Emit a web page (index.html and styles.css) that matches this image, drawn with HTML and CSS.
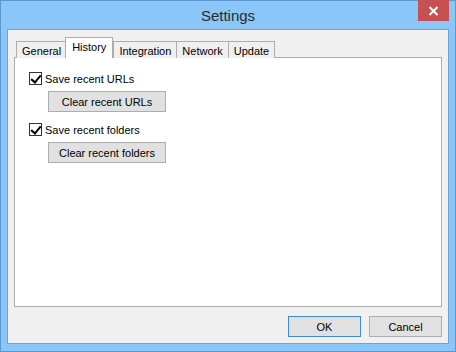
FILE: index.html
```html
<!DOCTYPE html>
<html lang="en">
  <head>
    <link rel="stylesheet" href="styles.css">
    <title>Settings</title>
  </head>
  <body>
    <div class="window">
      <div class="titlebar">
        <div class="title">Settings</div>
        <div class="close">
          <svg width="11" height="10" viewBox="0 0 11 10">
            <path d="M1.5 1 L9.5 9 M9.5 1 L1.5 9" stroke="#fff" stroke-width="2" />
          </svg>
        </div>
      </div>
      <div class="client">
        <div class="tabs">
          <div class="tab">General</div>
          <div class="tab tab-active">History</div>
          <div class="tab">Integration</div>
          <div class="tab">Network</div>
          <div class="tab">Update</div>
        </div>
        <div class="panel">
          <label class="check"><span class="box checked"></span>Save recent URLs</label>
          <button type="button" class="btn btn-wide">Clear recent URLs</button>
          <label class="check"><span class="box checked"></span>Save recent folders</label>
          <button type="button" class="btn btn-wide">Clear recent folders</button>
        </div>
        <div class="footer">
          <button type="button" class="btn btn-default">OK</button>
          <button type="button" class="btn">Cancel</button>
        </div>
      </div>
    </div>
  </body>
</html>
```

FILE: styles.css
```css
body {
  margin: 0;
  font-family: "Liberation Sans", Arial, sans-serif;
  font-size: 11px;
  color: #000;
}
.window {
  width: 456px;
  height: 352px;
  box-sizing: border-box;
  background-color: #8ac6f8;
  border: 1px solid #5e97cf;
  display: flex;
  flex-direction: column;
}
.titlebar {
  height: 28px;
  display: flex;
  justify-content: center;
  align-items: center;
  position: relative;
}
.title {
  font-size: 15px;
  color: #2b2b2b;
  padding-top: 1px;
}
.close {
  position: absolute;
  top: -1px;
  right: 6px;
  width: 31px;
  height: 21px;
  background-color: #c75050;
  display: flex;
  align-items: center;
  justify-content: center;
}
.client {
  flex: 1;
  margin: 0 6px 7px;
  border: 1px solid #6da4d8;
  background-color: #f0f0f0;
  padding: 8px 6px 6px;
  display: flex;
  flex-direction: column;
}
.tabs {
  display: flex;
  align-items: flex-end;
  padding-left: 2px;
  height: 20px;
  margin-bottom: -1px;
  position: relative;
  z-index: 1;
}
.tab {
  height: 17px;
  box-sizing: border-box;
  border: 1px solid #adadad;
  border-bottom: none;
  background-color: #f0f0f0;
  padding: 2px 5px 0;
  margin-right: -1px;
  line-height: 14px;
}
.tab-active {
  height: 21px;
  background-color: #fff;
  padding: 2px 6px 0;
  margin: 0 0 0 -1px;
  position: relative;
  z-index: 2;
}
.tab-active + .tab {
  margin-left: 0;
}
.panel {
  flex: 1;
  background-color: #fff;
  border: 1px solid #adadad;
  padding: 14px;
  display: flex;
  flex-direction: column;
  align-items: flex-start;
}
.check {
  display: flex;
  align-items: center;
  gap: 3px;
  height: 13px;
}
.box {
  width: 13px;
  height: 13px;
  box-sizing: border-box;
  border: 1px solid #333;
  background-color: #fff;
  position: relative;
}
.box.checked::after {
  content: "";
  position: absolute;
  left: 3px;
  top: 0;
  width: 4px;
  height: 8px;
  border: solid #000;
  border-width: 0 2px 2px 0;
  transform: rotate(40deg);
}
.btn {
  font-family: "Liberation Sans", Arial, sans-serif;
  font-size: 11px;
  color: #000;
  background-color: #e1e1e1;
  border: 1px solid #adadad;
  height: 21px;
  padding: 0;
  width: 73px;
}
.btn-wide {
  width: 118px;
  margin: 6px 0 11px 19px;
}
.btn-default {
  border-color: #3c8ad8;
}
.footer {
  display: flex;
  justify-content: flex-end;
  gap: 8px;
  margin-top: 9px;
}
```
